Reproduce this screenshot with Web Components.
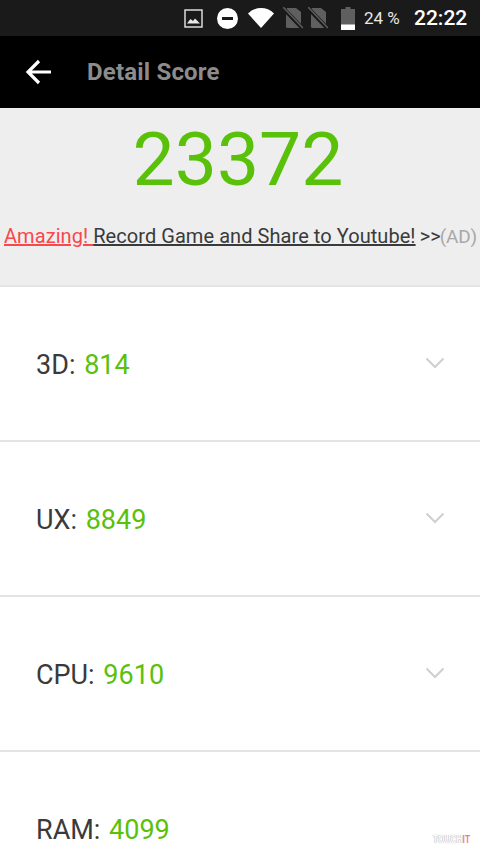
<!DOCTYPE html>
<html>
<head>
<meta charset="utf-8">
<style>
html, body { margin: 0; padding: 0; background: #fff; }
body { width: 480px; height: 854px; overflow: hidden; position: relative; font-family: Roboto, sans-serif; }
</style>
</head>
<body>
<status-bar></status-bar>
<title-bar heading="Detail Score"></title-bar>
<score-head score="23372"></score-head>
<score-row label="3D" value="814"></score-row>
<score-row label="UX" value="8849"></score-row>
<score-row label="CPU" value="9610"></score-row>
<score-row label="RAM" value="4099" last></score-row>
<water-mark></water-mark>

<script>
class StatusBar extends HTMLElement
{
    constructor()
    {
        super();
        this.shadow = this.attachShadow({ mode: "open" });
    }

    connectedCallback()
    {
        const noSim = `
            <svg width="20" height="22" viewBox="0 0 20 22">
                <path d="M3 2.5Q3 1 4.5 1H13L18 5V19.5Q18 21 16.5 21H4.5Q3 21 3 19.5Z" fill="#5f5f5f"/>
                <path d="M0 1L20 22" stroke="#1a1a1a" stroke-width="4"/>
                <path d="M0 0L20 21" stroke="#5f5f5f" stroke-width="1.5"/>
            </svg>`;
        this.shadow.innerHTML = `
            <style>
                :host {
                    display: flex;
                    height: 36px;
                    box-sizing: border-box;
                    background: #1a1a1a;
                    color: #fff;
                    align-items: center;
                    font-family: Roboto, sans-serif;
                    padding-left: 184px;
                }
                svg { display: block; flex: none; }
                .image { margin-right: 14px; }
                .dnd { margin-right: 10px; }
                .wifi { margin-right: 9px; }
                .sim1 { margin-right: 5px; }
                .sim2 { margin-right: 13px; }
                .batt { margin-right: 9px; }
                .pct { font-size: 17px; width: 41px; white-space: nowrap; color: #e8e8e8; }
                .time { font-size: 21px; font-weight: 500; margin-left: 9px; white-space: nowrap; }
            </style>
            <svg class="image" width="19" height="19" viewBox="0 0 19 19">
                <rect x="1" y="1" width="17" height="17" fill="none" stroke="#e8e8e8" stroke-width="1.4"/>
                <path d="M3 14.5L6.5 10L9 12L11 9.5L16 14.5Z" fill="#e8e8e8"/>
            </svg>
            <svg class="dnd" width="21" height="21" viewBox="0 0 21 21">
                <circle cx="10.5" cy="10.5" r="10.5" fill="#fff"/>
                <rect x="5" y="9" width="11" height="3" fill="#1a1a1a"/>
            </svg>
            <svg class="wifi" width="26" height="20" viewBox="0 0 26 20">
                <path d="M0 5.5C7 -1.8 19 -1.8 26 5.5L13 20Z" fill="#fff"/>
            </svg>
            <span class="sim1">${noSim}</span>
            <span class="sim2">${noSim}</span>
            <svg class="batt" width="14" height="23" viewBox="0 0 14 23">
                <path d="M4.5 0H9.5V2H14V23H0V2H4.5Z" fill="#5f5f5f"/>
                <rect x="0" y="17.5" width="14" height="5.5" fill="#fff"/>
            </svg>
            <span class="pct">24 %</span>
            <span class="time">22:22</span>
        `;
    }
}

class TitleBar extends HTMLElement
{
    constructor()
    {
        super();
        this.shadow = this.attachShadow({ mode: "open" });
    }

    connectedCallback()
    {
        this.shadow.innerHTML = `
            <style>
                :host {
                    display: flex;
                    height: 72px;
                    background: #000;
                    align-items: center;
                    font-family: Roboto, sans-serif;
                    padding-left: 25px;
                }
                svg { display: block; margin-right: 35px; }
                span { color: #8c8c8c; font-size: 24px; font-weight: 700; letter-spacing: 0.18px; line-height: 74px; }
            </style>
            <svg width="27" height="26" viewBox="0 0 27 26">
                <path d="M26 13H3M14 2L3 13L14 24" fill="none" stroke="#fff" stroke-width="3.2"/>
            </svg>
            <span>${this.getAttribute("heading")}</span>
        `;
    }
}

class ScoreHead extends HTMLElement
{
    constructor()
    {
        super();
        this.shadow = this.attachShadow({ mode: "open" });
    }

    connectedCallback()
    {
        this.shadow.innerHTML = `
            <style>
                :host {
                    display: block;
                    height: 179px;
                    box-sizing: border-box;
                    background: #eeeeee;
                    border-bottom: 2px solid #e4e4e4;
                    font-family: Roboto, sans-serif;
                    text-align: center;
                }
                .score { color: #5ac10a; font-size: 75px; line-height: 100px; height: 100px; padding-top: 1px; padding-right: 4px; }
                .ad { font-size: 20px; line-height: 28px; margin-top: 13px; color: #3a3a3a; white-space: nowrap; padding-left: 4px; text-align: left; letter-spacing: 0.06px; }
                a { text-decoration: underline; color: #3a3a3a; }
                a.hot { color: #f9474c; }
                .more { font-weight: 400; margin-left: -1px; }
                .tag { color: #a8a8a8; font-size: 19px; letter-spacing: -0.2px; margin-left: -1px; }
            </style>
            <div class="score">${this.getAttribute("score")}</div>
            <div class="ad"><a class="hot">Amazing! </a><a>Record Game and Share to Youtube!</a> <span class="more">&gt;&gt;</span><span class="tag">(AD)</span></div>
        `;
    }
}

class ScoreRow extends HTMLElement
{
    constructor()
    {
        super();
        this.shadow = this.attachShadow({ mode: "open" });
    }

    connectedCallback()
    {
        const last = this.hasAttribute("last");
        const chevron = last ? "" : `
            <svg width="20" height="12" viewBox="0 0 20 12">
                <path d="M1.5 1.5L10 10L18.5 1.5" fill="none" stroke="#cfcfcf" stroke-width="2"/>
            </svg>`;
        this.shadow.innerHTML = `
            <style>
                :host {
                    display: flex;
                    height: ${last ? "102px" : "155px"};
                    box-sizing: border-box;
                    ${last ? "" : "border-bottom: 2px solid #e4e4e4;"}
                    align-items: flex-start;
                    justify-content: space-between;
                    font-family: Roboto, sans-serif;
                    padding: 62px 35px 0 36px;
                    font-size: 27px;
                    line-height: 32px;
                    color: #3a3a3a;
                }
                b { font-weight: 400; color: #5ac10a; margin-left: 2px; }
                svg { display: block; margin-top: 8px; }
            </style>
            <div>${this.getAttribute("label")}: <b>${this.getAttribute("value")}</b></div>
            ${chevron}
        `;
    }
}

class WaterMark extends HTMLElement
{
    constructor()
    {
        super();
        this.shadow = this.attachShadow({ mode: "open" });
    }

    connectedCallback()
    {
        this.shadow.innerHTML = `
            <style>
                :host {
                    display: block;
                    position: absolute;
                    left: 433px;
                    top: 833px;
                    font-family: "Liberation Sans", sans-serif;
                    font-size: 11px;
                    font-weight: 700;
                    line-height: 13px;
                    color: #fff;
                    text-shadow: 0 0 1px #aaa, 0 0 1px #aaa;
                    transform: scaleX(0.76);
                    transform-origin: left top;
                }
                span { color: #f08080; text-shadow: none; }
            </style>
            TOUCH<span>IT</span>
        `;
    }
}

customElements.define("status-bar", StatusBar);
customElements.define("title-bar", TitleBar);
customElements.define("score-head", ScoreHead);
customElements.define("score-row", ScoreRow);
customElements.define("water-mark", WaterMark);
</script>
</body>
</html>
